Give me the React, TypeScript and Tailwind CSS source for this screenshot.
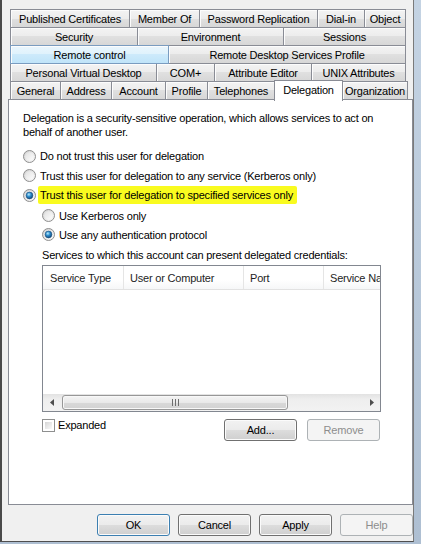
import React from 'react';
import clsx from 'clsx';

type TabDef = { label: string; w: string; hover?: boolean; selected?: boolean };

const tabRows: TabDef[][] = [
  [
    { label: 'Published Certificates', w: 'w-[120px]' },
    { label: 'Member Of', w: 'w-[71px]' },
    { label: 'Password Replication', w: 'w-[119px]' },
    { label: 'Dial-in', w: 'w-[48px]' },
    { label: 'Object', w: 'w-[42px]' },
  ],
  [
    { label: 'Security', w: 'w-[128px]' },
    { label: 'Environment', w: 'w-[147px]' },
    { label: 'Sessions', w: 'w-[123px]' },
  ],
  [
    { label: 'Remote control', w: 'w-[159px]', hover: true },
    { label: 'Remote Desktop Services Profile', w: 'w-[238px]' },
  ],
  [
    { label: 'Personal Virtual Desktop', w: 'w-[147px]' },
    { label: 'COM+', w: 'w-[59px]' },
    { label: 'Attribute Editor', w: 'w-[98px]' },
    { label: 'UNIX Attributes', w: 'w-[95px]' },
  ],
  [
    { label: 'General', w: 'w-[51px]' },
    { label: 'Address', w: 'w-[52px]' },
    { label: 'Account', w: 'w-[55px]' },
    { label: 'Profile', w: 'w-[43px]' },
    { label: 'Telephones', w: 'w-[68px]' },
    { label: 'Delegation', w: 'w-[69px]', selected: true },
    { label: 'Organization', w: 'w-[66px]' },
  ],
];

function Tab({ tab, first }: { tab: TabDef; first: boolean }) {
  if (tab.selected) {
    return (
      <div
        className={clsx(
          tab.w,
          'relative z-10 -ml-px -mb-px h-[21px] flex items-center justify-center border border-b-0 border-[#898c95] bg-white pb-[2px]'
        )}
      >
        {tab.label}
      </div>
    );
  }
  return (
    <div
      className={clsx(
        tab.w,
        'h-[19px] flex items-center justify-center border whitespace-nowrap shadow-[inset_1px_1px_0_#fcfcfc]',
        !first && '-ml-px',
        tab.hover
          ? 'relative z-[1] border-[#7a9cc0] bg-[linear-gradient(to_bottom,#eaf6fd,#dff2fc_50%,#cdeafb_50%,#c0e4f9)]'
          : 'border-[#898c95] bg-[linear-gradient(to_bottom,#f3f3f3,#ececec_50%,#e0e0e0_50%,#d7d7d7)]'
      )}
    >
      {tab.label}
    </div>
  );
}

function Radio({ checked }: { checked?: boolean }) {
  return (
    <svg width="13" height="13" viewBox="0 0 13 13" className="shrink-0">
      <defs>
        <linearGradient id="rOuter" x1="0" y1="0" x2="1" y2="1">
          <stop offset="0" stopColor="#cfcfcf" />
          <stop offset="1" stopColor="#fbfbfb" />
        </linearGradient>
        <linearGradient id="rInner" x1="0" y1="0" x2="1" y2="1">
          <stop offset="0" stopColor="#e1e1e1" />
          <stop offset="1" stopColor="#fdfdfd" />
        </linearGradient>
        <radialGradient id="rDot" cx="0.4" cy="0.35" r="0.7">
          <stop offset="0" stopColor="#b9ecfd" />
          <stop offset="0.45" stopColor="#2c8ccc" />
          <stop offset="1" stopColor="#0f3f6e" />
        </radialGradient>
      </defs>
      <circle cx="6.5" cy="6.5" r="6" fill="url(#rOuter)" stroke="#8f8f8f" strokeWidth="1" />
      <circle cx="6.5" cy="6.5" r="4.2" fill="url(#rInner)" />
      {checked && <circle cx="6.5" cy="6.5" r="3.4" fill="url(#rDot)" stroke="#1b4f7d" strokeWidth="0.6" />}
    </svg>
  );
}

function Button({ label, primary, disabled }: { label: string; primary?: boolean; disabled?: boolean }) {
  return (
    <div
      className={clsx(
        'w-[73px] h-[22px] flex items-center justify-center rounded-[3px] border',
        disabled
          ? 'border-[#adb2b5] bg-[#f4f4f4] text-[#8d8d8d]'
          : 'bg-[linear-gradient(to_bottom,#f2f2f2,#ebebeb_50%,#dddddd_50%,#cfcfcf)] shadow-[inset_0_0_0_1px_#fbfbfb]',
        !disabled && (primary ? 'border-[#3c7fb1] shadow-[inset_0_0_0_1px_#48d0fb]' : 'border-[#707070]')
      )}
    >
      {label}
    </div>
  );
}

const options = [
  { label: 'Do not trust this user for delegation', h: 'h-[20px]', indent: false },
  { label: 'Trust this user for delegation to any service (Kerberos only)', h: 'h-[19px]', indent: false },
  { label: 'Trust this user for delegation to specified services only', h: 'h-[20px]', indent: false, checked: true, mark: true },
  { label: 'Use Kerberos only', h: 'h-[21px]', indent: true },
  { label: 'Use any authentication protocol', h: 'h-[17px]', indent: true, checked: true },
];

const columns = [
  { label: 'Service Type', w: 'w-[81px]' },
  { label: 'User or Computer', w: 'w-[120px]' },
  { label: 'Port', w: 'w-[80px]' },
  { label: 'Service Name', w: 'w-[56px]' },
];

export default function App() {
  return (
    <div className="w-[421px] h-[544px] overflow-hidden bg-[linear-gradient(to_bottom,#c4d3e3,#aebfd2)] font-['Liberation_Sans',Arial,sans-serif] text-[11px] leading-[14px] tracking-[-0.2px] text-black">
      <div className="w-[414px] h-[542px] bg-[#f0f0f0] border-l-2 border-l-[#4a4a4a] border-r border-r-[#7a7a7a] border-b border-b-[#4f4f4f] pl-[6px] pt-[9px]">
        {/* tab strip */}
        <div className="ml-[2px]">
          {tabRows.map((row, ri) => (
            <div key={ri} className={clsx('flex h-[19px]', ri > 0 && '-mt-px', ri === tabRows.length - 1 && 'items-end')}>
              {row.map((tab, ti) => (
                <Tab key={tab.label} tab={tab} first={ti === 0} />
              ))}
            </div>
          ))}
        </div>

        {/* page */}
        <div className="w-[405px] h-[406px] -mt-px border border-[#898c95] bg-white pt-[11px]">
          <p className="pl-[14px] pr-[10px]">
            Delegation is a security-sensitive operation, which allows services to act on
            <br />
            behalf of another user.
          </p>

          <div className="mt-[7px]">
            {options.map((o) => (
              <div key={o.label} className={clsx('flex items-center', o.h, o.indent ? 'pl-[33px]' : 'pl-[14px]')}>
                <Radio checked={o.checked} />
                {o.mark ? (
                  <span className="ml-[2px] h-[18px] flex items-center pl-[2px] pr-[4px] bg-[#f9fb1f] rounded-[2px]">
                    {o.label}
                  </span>
                ) : (
                  <span className="ml-[4px]">{o.label}</span>
                )}
              </div>
            ))}
          </div>

          <p className="mt-[5px] pl-[33px]">Services to which this account can present delegated credentials:</p>

          {/* list view */}
          <div className="mt-[3px] ml-[33px] w-[339px] h-[147px] border border-[#828790] flex flex-col">
            <div className="flex h-[24px] border-b border-[#e2e2e2] bg-[linear-gradient(to_bottom,#ffffff,#ffffff_60%,#f6f7f8)] overflow-hidden">
              {columns.map((c, i) => (
                <div
                  key={c.label}
                  className={clsx(
                    c.w,
                    'shrink-0 flex items-center whitespace-nowrap overflow-hidden text-[#1e1e1e]',
                    i === 0 ? 'pl-[7px]' : 'pl-[6px]',
                    i < 3 && 'border-r border-[#e5e5e5]'
                  )}
                >
                  {c.label}
                </div>
              ))}
            </div>
            <div className="flex-1" />
            {/* horizontal scroll bar */}
            <div className="h-[17px] flex items-center bg-[linear-gradient(to_bottom,#e2e2e2,#eeeeee_30%,#f2f2f2)]">
              <div className="w-[17px] h-full flex items-center justify-center">
                <svg width="4" height="7" viewBox="0 0 4 7">
                  <path d="M4 0 L0 3.5 L4 7 Z" fill="#4d4d4d" />
                </svg>
              </div>
              <div className="ml-[2px] w-[226px] h-[15px] rounded-[3px] border border-[#979797] bg-[linear-gradient(to_bottom,#f4f4f4,#e9e9e9_50%,#d9d9d9_50%,#d2d2d2)] flex items-center justify-center gap-[2px] shadow-[inset_0_0_0_1px_#f8f8f8]">
                <span className="w-px h-[7px] bg-[#6e6e6e]" />
                <span className="w-px h-[7px] bg-[#6e6e6e]" />
                <span className="w-px h-[7px] bg-[#6e6e6e]" />
              </div>
              <div className="flex-1" />
              <div className="w-[17px] h-full flex items-center justify-center">
                <svg width="4" height="7" viewBox="0 0 4 7">
                  <path d="M0 0 L4 3.5 L0 7 Z" fill="#4d4d4d" />
                </svg>
              </div>
            </div>
          </div>

          <div className="mt-[7px] pl-[33px] pr-[32px] flex items-start">
            <div className="flex items-center h-[14px] mt-[-1px]">
              <div className="w-[13px] h-[13px] border border-[#8e8f8f] p-[2px] bg-white">
                <div className="w-full h-full bg-[linear-gradient(135deg,#d5d5d5,#fafafa)]" />
              </div>
              <span className="ml-[3px]">Expanded</span>
            </div>
            <div className="flex-1" />
            <div className="flex gap-[10px]">
              <Button label="Add..." />
              <Button label="Remove" disabled />
            </div>
          </div>
        </div>

        {/* dialog buttons */}
        <div className="mt-[9px] flex justify-end gap-[8px]">
          <Button label="OK" primary />
          <Button label="Cancel" />
          <Button label="Apply" />
          <Button label="Help" disabled />
        </div>
      </div>
    </div>
  );
}
